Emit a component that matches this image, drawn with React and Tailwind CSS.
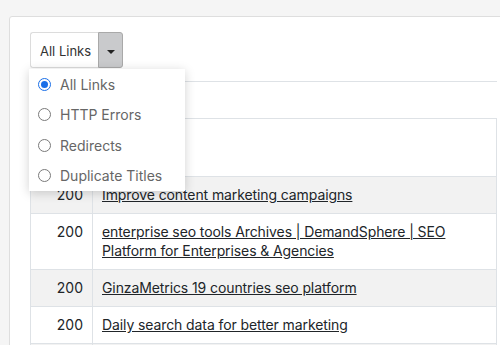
import React, { useState } from "react";

const OPTIONS = ["All Links", "HTTP Errors", "Redirects", "Duplicate Titles"];

const ROWS = [
  { code: "", title: "", h: "h-[58px]" },
  { code: "200", title: "Improve content marketing campaigns", h: "h-[37px]" },
  {
    code: "200",
    title: "enterprise seo tools Archives | DemandSphere | SEO Platform for Enterprises & Agencies",
    h: "h-[56px]",
  },
  { code: "200", title: "GinzaMetrics 19 countries seo platform", h: "h-[37px]" },
  { code: "200", title: "Daily search data for better marketing", h: "h-[37px]" },
  { code: "", title: "", h: "h-[37px]" },
];

function Radio({ checked }) {
  if (checked) {
    return (
      <span className="w-[13px] h-[13px] rounded-full border-[1.5px] border-[#1a6fe8] flex items-center justify-center shrink-0">
        <span className="w-[7px] h-[7px] rounded-full bg-[#1a6fe8]" />
      </span>
    );
  }
  return <span className="w-[13px] h-[13px] rounded-full border border-[#7a7a7a] bg-white shrink-0" />;
}

export default function App() {
  const [filter, setFilter] = useState("All Links");

  return (
    <div
      className="w-[500px] h-[345px] overflow-hidden bg-[#f5f5f5] pt-4 pl-[9px]"
      style={{ fontFamily: "Inter, 'Liberation Sans', sans-serif" }}
    >
      <div className="relative w-[520px] h-[400px] bg-white border border-[#dedede] rounded-[3px] pl-[20px] pt-[15px]">
        {/* filter select */}
        <div className="relative inline-flex h-9 align-top">
          <div className="flex items-center pl-[9px] pt-[3px] w-[68px] border border-r-0 border-[#dcdcdc] rounded-l-[3px] text-[13px] text-[#333]">
            {filter}
          </div>
          <button
            type="button"
            className="w-[25px] h-9 flex items-center justify-center pt-[3px] bg-[#c9cacc] border border-[#a9a9a9] rounded-r-[3px]"
          >
            <span className="w-0 h-0 border-l-[4px] border-r-[4px] border-t-[4px] border-l-transparent border-r-transparent border-t-[#222]" />
          </button>

          {/* open menu */}
          <div className="absolute z-10 left-[-1px] top-[37px] w-[156px] bg-white shadow-[0_2px_10px_rgba(0,0,0,0.18)]">
            {OPTIONS.map((opt) => (
              <div
                key={opt}
                onClick={() => setFilter(opt)}
                className="h-[30.5px] flex items-center gap-[9px] pl-[9px] text-[14px] text-[#666] cursor-pointer"
              >
                <Radio checked={opt === filter} />
                <span>{opt}</span>
              </div>
            ))}
          </div>
        </div>

        {/* results table */}
        <div className="mt-[13px] w-[467px] text-[14px] text-[#212529]">
          <div className="flex h-[37px] border-t border-[#dee2e6]">
            <div className="w-[62px]" />
            <div className="flex-1" />
          </div>
          {ROWS.map((row, i) => (
            <div
              key={i}
              className={`flex ${row.h} overflow-hidden border-t border-x border-[#dee2e6] ${i % 2 === 1 ? "bg-[#f2f2f2]" : "bg-white"}`}
            >
              <div className="w-[62px] shrink-0 text-right px-[9px] pt-[8px] leading-[19px] border-r border-[#dee2e6]">
                {row.code}
              </div>
              <div className="flex-1 px-[9px] pt-[8px] leading-[19px] pr-[40px] tracking-[-0.1px]">
                {row.title && <a className="underline">{row.title}</a>}
              </div>
            </div>
          ))}
        </div>
      </div>
    </div>
  );
}
